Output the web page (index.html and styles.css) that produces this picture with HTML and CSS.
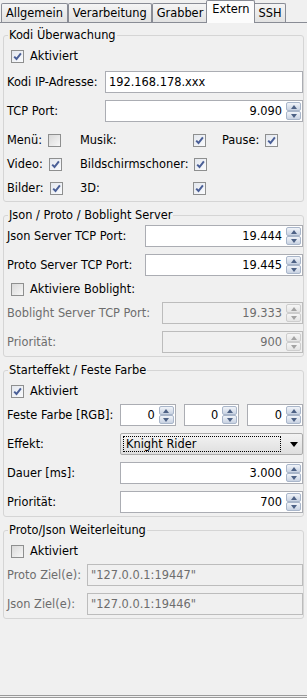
FILE: index.html
```html
<!DOCTYPE html>
<html lang="de">
<head>
  <meta charset="UTF-8" />
  <meta name="viewport" content="width=device-width, initial-scale=1.0"/>
  <title>Extern</title>
  <link rel="stylesheet" href="styles.css">
</head>
<body>

  <div class="window">
    <div class="tabs">
      <div class="tab">Allgemein</div>
      <div class="tab">Verarbeitung</div>
      <div class="tab">Grabber</div>
      <div class="tab active">Extern</div>
      <div class="tab">SSH</div>
    </div>

    <div class="panel">

      <fieldset class="group kodi">
        <legend>Kodi Überwachung</legend>
        <div class="check-row"><span class="cb"><svg class="tick" viewBox="0 0 11 11"><path d="M2.2 5.6l2.3 2.4 4.4-5.6"/></svg></span>Aktiviert</div>
        <div class="field-row">
          <span class="lbl">Kodi IP-Adresse:</span>
          <div class="text">192.168.178.xxx</div>
        </div>
        <div class="field-row">
          <span class="lbl">TCP Port:</span>
          <div class="spin"><span class="val">9.090</span><span class="arrows"><i class="up"></i><i class="down"></i></span></div>
        </div>
        <div class="opt-row">
          <div class="opt">Menü:<span class="cb"></span></div>
          <div class="opt spread">Musik:<span class="cb"><svg class="tick" viewBox="0 0 11 11"><path d="M2.2 5.6l2.3 2.4 4.4-5.6"/></svg></span></div>
          <div class="opt">Pause:<span class="cb"><svg class="tick" viewBox="0 0 11 11"><path d="M2.2 5.6l2.3 2.4 4.4-5.6"/></svg></span></div>
        </div>
        <div class="opt-row">
          <div class="opt">Video:<span class="cb"><svg class="tick" viewBox="0 0 11 11"><path d="M2.2 5.6l2.3 2.4 4.4-5.6"/></svg></span></div>
          <div class="opt spread">Bildschirmschoner:<span class="cb"><svg class="tick" viewBox="0 0 11 11"><path d="M2.2 5.6l2.3 2.4 4.4-5.6"/></svg></span></div>
        </div>
        <div class="opt-row">
          <div class="opt">Bilder:<span class="cb"><svg class="tick" viewBox="0 0 11 11"><path d="M2.2 5.6l2.3 2.4 4.4-5.6"/></svg></span></div>
          <div class="opt spread">3D:<span class="cb"><svg class="tick" viewBox="0 0 11 11"><path d="M2.2 5.6l2.3 2.4 4.4-5.6"/></svg></span></div>
        </div>
      </fieldset>

      <fieldset class="group server">
        <legend>Json / Proto / Boblight Server</legend>
        <div class="field-row">
          <span class="lbl">Json Server TCP Port:</span>
          <div class="spin"><span class="val">19.444</span><span class="arrows"><i class="up"></i><i class="down"></i></span></div>
        </div>
        <div class="field-row">
          <span class="lbl">Proto Server TCP Port:</span>
          <div class="spin"><span class="val">19.445</span><span class="arrows"><i class="up"></i><i class="down"></i></span></div>
        </div>
        <div class="check-row"><span class="cb"></span>Aktiviere Boblight:</div>
        <div class="field-row off">
          <span class="lbl wide">Boblight Server TCP Port:</span>
          <div class="spin"><span class="val">19.333</span><span class="arrows"><i class="up"></i><i class="down"></i></span></div>
        </div>
        <div class="field-row off">
          <span class="lbl wide">Priorität:</span>
          <div class="spin"><span class="val">900</span><span class="arrows"><i class="up"></i><i class="down"></i></span></div>
        </div>
      </fieldset>

      <fieldset class="group effect">
        <legend>Starteffekt / Feste Farbe</legend>
        <div class="check-row"><span class="cb"><svg class="tick" viewBox="0 0 11 11"><path d="M2.2 5.6l2.3 2.4 4.4-5.6"/></svg></span>Aktiviert</div>
        <div class="field-row">
          <span class="lbl">Feste Farbe [RGB]:</span>
          <div class="rgb">
            <div class="spin"><span class="val">0</span><span class="arrows"><i class="up"></i><i class="down"></i></span></div>
            <div class="spin"><span class="val">0</span><span class="arrows"><i class="up"></i><i class="down"></i></span></div>
            <div class="spin"><span class="val">0</span><span class="arrows"><i class="up"></i><i class="down"></i></span></div>
          </div>
        </div>
        <div class="field-row">
          <span class="lbl">Effekt:</span>
          <div class="combo"><span class="sel">Knight Rider</span><span class="drop"></span></div>
        </div>
        <div class="field-row">
          <span class="lbl">Dauer [ms]:</span>
          <div class="spin"><span class="val">3.000</span><span class="arrows"><i class="up"></i><i class="down"></i></span></div>
        </div>
        <div class="field-row">
          <span class="lbl">Priorität:</span>
          <div class="spin"><span class="val">700</span><span class="arrows"><i class="up"></i><i class="down"></i></span></div>
        </div>
      </fieldset>

      <fieldset class="group forward">
        <legend>Proto/Json Weiterleitung</legend>
        <div class="check-row"><span class="cb"></span>Aktiviert</div>
        <div class="field-row off">
          <span class="lbl">Proto Ziel(e):</span>
          <div class="text">"127.0.0.1:19447"</div>
        </div>
        <div class="field-row off">
          <span class="lbl">Json Ziel(e):</span>
          <div class="text">"127.0.0.1:19446"</div>
        </div>
      </fieldset>

    </div>
  </div>

</body>
</html>
```

FILE: styles.css
```css
body {
  margin: 0;
  background: #f0f0f0;
  font-family: "DejaVu Sans", Tahoma, sans-serif;
  font-size: 11.4px;
  color: #000;
}

.window {
  width: 307px;
  height: 698px;
  box-sizing: border-box;
  display: flex;
  flex-direction: column;
  border-bottom: 3px double #9a9a9a;
}

/* tab bar */

.tabs {
  height: 23px;
  box-sizing: border-box;
  display: flex;
  align-items: flex-end;
  padding-left: 1px;
  border-bottom: 1px solid #898c95;
}

.tab {
  height: 19px;
  line-height: 18px;
  padding: 0 4px;
  box-sizing: border-box;
  border: 1px solid #898c95;
  border-bottom: none;
  border-radius: 2px 2px 0 0;
  background: linear-gradient(#f5f5f5, #e2e2e2);
}

.tab.active {
  height: 23px;
  line-height: 17px;
  margin: 0 -2px -1px;
  padding: 0 5px;
  background: #fcfcfc;
  position: relative;
}

/* groups */

.panel {
  flex: 1;
  padding: 0 3px;
}

.group {
  margin: 6px 0 0;
  padding: 0 0 3px 3px;
  min-width: 0;
  border: 1px solid #d5d5d5;
  border-radius: 3px;
}

.group:first-child {
  margin-top: 5px;
}

.group legend {
  margin-left: 1px;
  padding: 0 1px;
  line-height: 14px;
}

.check-row {
  height: 20px;
  margin-top: 3px;
  padding-left: 4px;
  display: flex;
  align-items: center;
  gap: 6px;
}

legend + .check-row {
  margin-top: 4px;
}

.field-row {
  height: 22px;
  margin-top: 7px;
  display: flex;
  align-items: center;
}

legend + .field-row,
.check-row + .field-row {
  margin-top: 3px;
}

.kodi .check-row + .field-row {
  margin-top: 5px;
}

.lbl {
  flex: none;
}

.kodi .lbl { width: 98px; }
.server .lbl { width: 138px; }
.server .lbl.wide { width: 155px; }
.effect .lbl { width: 113px; }
.forward .lbl { width: 80px; }

.off {
  color: #6d6d6d;
}

/* checkbox */

.cb {
  flex: none;
  width: 13px;
  height: 13px;
  box-sizing: border-box;
  border: 1px solid #8e8f8f;
  background: linear-gradient(135deg, #d9d9d9, #f7f7f7);
  display: flex;
}

.cb .tick {
  width: 11px;
  height: 11px;
  fill: none;
  stroke: #4a5f97;
  stroke-width: 2;
}

.cb:has(.tick) {
  background: linear-gradient(135deg, #e3e7ee, #fafbfd);
}

/* Menü / Musik / Pause grid */

.opt-row {
  height: 20px;
  margin-top: 4px;
  display: grid;
  grid-template-columns: 73px 142px auto;
  align-items: center;
}

.field-row + .opt-row {
  margin-top: 8px;
}

.opt {
  display: flex;
  align-items: center;
  gap: 6px;
}

.opt.spread {
  justify-content: space-between;
  padding-right: 16px;
}

/* inputs */

.text,
.spin {
  flex: 1;
  height: 22px;
  box-sizing: border-box;
  border: 1px solid #abadb3;
  background: #fff;
  display: flex;
  align-items: center;
}

.text {
  padding-left: 3px;
}

.spin {
  justify-content: flex-end;
  padding-right: 1px;
}

.spin .val {
  padding-right: 4px;
}

.arrows {
  width: 15px;
  height: 18px;
  display: flex;
  flex-direction: column;
}

.arrows i {
  flex: 1;
  border: 1px solid #a9b6ca;
  border-radius: 2px;
  background: linear-gradient(#f1f4f9, #c8d2e2);
  display: flex;
  align-items: center;
  justify-content: center;
}

.arrows i::after {
  content: "";
  border-left: 3.5px solid transparent;
  border-right: 3.5px solid transparent;
}

.arrows .up::after {
  border-bottom: 4px solid #4d6185;
}

.arrows .down::after {
  border-top: 4px solid #4d6185;
}

.off .text,
.off .spin {
  background: #f0f0f0;
  border-color: #bcbcbc;
}

.off .arrows i {
  border-color: #cdcdcd;
  background: linear-gradient(#f6f6f6, #e4e4e4);
}

.off .arrows .up::after { border-bottom-color: #a3a3a3; }
.off .arrows .down::after { border-top-color: #a3a3a3; }

.rgb {
  flex: 1;
  display: flex;
  gap: 8px;
}

/* combo box */

.combo {
  flex: 1;
  height: 22px;
  box-sizing: border-box;
  padding: 2px;
  border: 1px solid #acacac;
  border-radius: 2px;
  background: linear-gradient(#f3f3f3, #dedede);
  display: flex;
}

.combo .sel {
  flex: 1;
  padding-left: 2px;
  border: 1px dotted #000;
  display: flex;
  align-items: center;
}

.combo .drop {
  width: 17px;
  display: flex;
  align-items: center;
  justify-content: flex-end;
  padding-right: 2px;
}

.combo .drop::after {
  content: "";
  border-left: 4px solid transparent;
  border-right: 4px solid transparent;
  border-top: 5px solid #000;
}
```
